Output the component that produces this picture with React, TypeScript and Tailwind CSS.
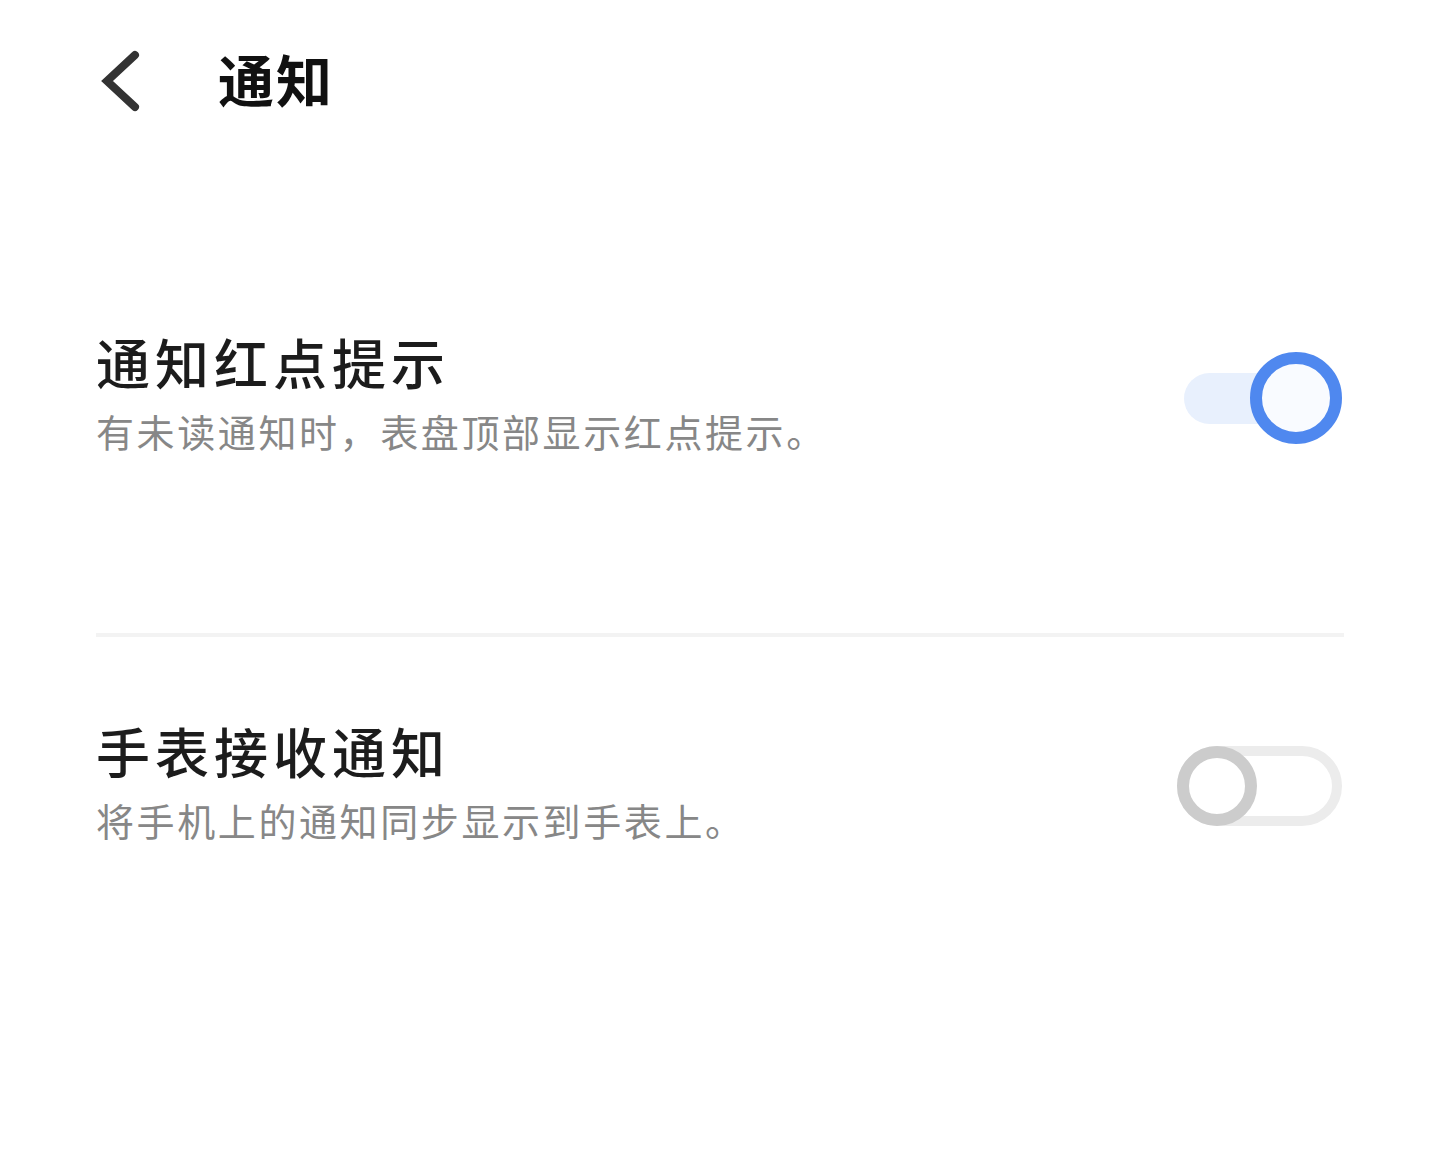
import React from "react";

const cjk = "font-['Noto_Sans_CJK_SC','Noto_Sans',sans-serif]";

function BackIcon() {
  return (
    <svg width="48" height="64" viewBox="0 0 48 64" fill="none">
      <polyline
        points="37,6 9,32 37,58"
        stroke="#333333"
        strokeWidth="8"
        strokeLinecap="round"
        strokeLinejoin="miter"
      />
    </svg>
  );
}

function SwitchOn() {
  return (
    <div className="relative w-[158px] h-[92px] shrink-0">
      <div className="absolute left-0 top-[21px] h-[51px] w-[130px] rounded-full bg-[#e8f0fd]" />
      <div className="absolute right-0 top-0 w-[92px] h-[92px] rounded-full border-[12px] border-[#4f88ef] bg-[#f9fbff]" />
    </div>
  );
}

function SwitchOff() {
  return (
    <div className="relative w-[165px] h-[80px] shrink-0 rounded-full border-[10px] border-[#ececec] bg-white">
      <div className="absolute left-[-10px] top-[-10px] w-[80px] h-[80px] rounded-full border-[12px] border-[#cccccc] bg-white" />
    </div>
  );
}

type RowProps = {
  title: string;
  desc: string;
  on: boolean;
  height: string;
};

function SettingRow({ title, desc, on, height }: RowProps) {
  return (
    <div className={`flex items-center justify-between px-[96px] ${height}`}>
      <div className="flex flex-col pb-[9px]">
        <div className="text-[54px] leading-[60px] font-medium tracking-[5px] text-[#1c1c1c]">
          {title}
        </div>
        <div className="mt-[16px] text-[38px] leading-[46px] tracking-[2.6px] text-[#878787]">
          {desc}
        </div>
      </div>
      <div className="mr-[2px]">{on ? <SwitchOn /> : <SwitchOff />}</div>
    </div>
  );
}

export default function App() {
  return (
    <div className={`w-[1440px] h-[1152px] bg-white ${cjk}`}>
      <div className="flex items-center h-[162px] pl-[98px]">
        <BackIcon />
        <div className="ml-[72px] mb-[7px] text-[56px] leading-[64px] font-bold tracking-[2px] text-[#111111]">
          通知
        </div>
      </div>

      <SettingRow
        title="通知红点提示"
        desc="有未读通知时，表盘顶部显示红点提示。"
        on={true}
        height="h-[471px]"
      />

      <div className="mx-[96px] h-[4px] bg-[#f3f3f3]" />

      <SettingRow
        title="手表接收通知"
        desc="将手机上的通知同步显示到手表上。"
        on={false}
        height="h-[298px]"
      />
    </div>
  );
}
